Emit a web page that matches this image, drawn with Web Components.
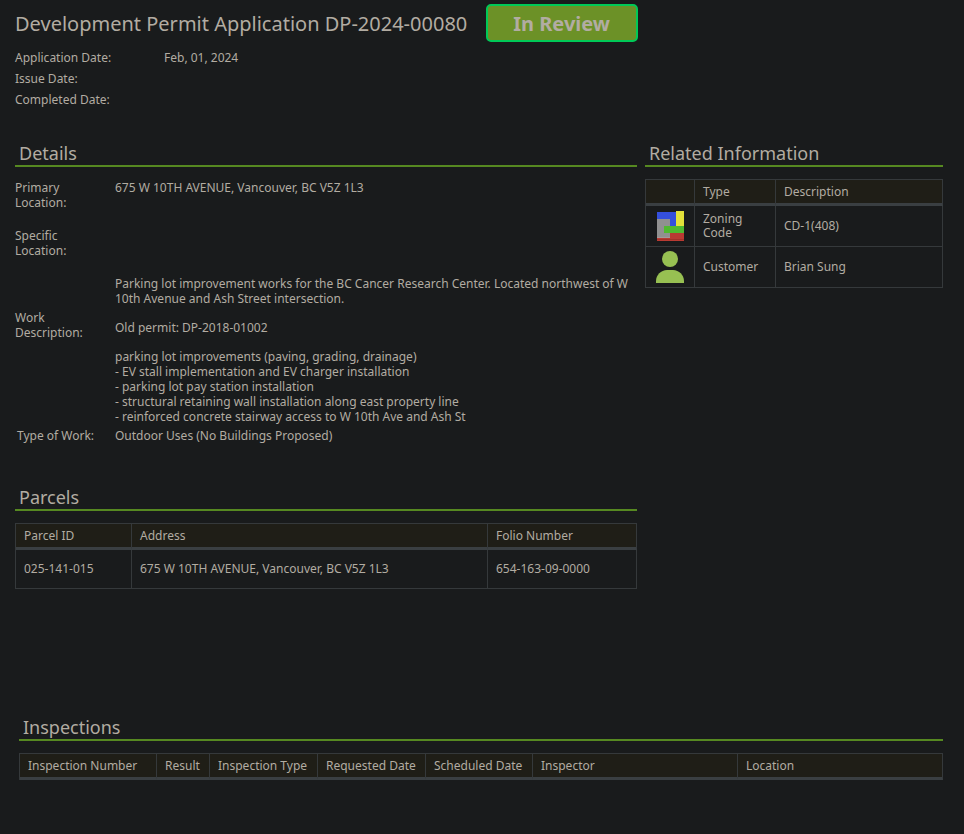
<!DOCTYPE html>
<html lang="en">
<head>
<meta charset="utf-8">
<meta name="viewport" content="width=device-width, initial-scale=1">
<title>Development Permit Application DP-2024-00080</title>
<style>
  html { background: #191b1c; }
  body {
    margin: 0;
    color: #b2aca2;
    background: #191b1c;
    font: 12px/15px "Noto Sans", "Open Sans", sans-serif;
  }
</style>
</head>
<body>
<permit-page></permit-page>

<template id="status-badge">
  <style>
    :host {
      display: block;
      box-sizing: border-box;
      padding: 4px 26px 2px 25px;
      border: 2px solid #00c957;
      border-radius: 5px;
      background: #6c9127;
      font-size: 20px;
      line-height: 28px;
      font-weight: 700;
      white-space: nowrap;
    }
  </style>
  <slot></slot>
</template>

<template id="panel-section">
  <style>
    :host { display: block; }
    h2 {
      margin: 0 0 12px;
      padding-left: 4px;
      border-bottom: 2px solid #568921;
      font-size: 18px;
      line-height: 24px;
      font-weight: 400;
    }
  </style>
  <section>
    <h2></h2>
    <slot></slot>
  </section>
</template>

<template id="field-row">
  <style>
    :host {
      display: grid;
      grid-template-columns: var(--label-width, 100px) minmax(0, 1fr);
    }
    .label { max-width: var(--label-max, 80px); }
  </style>
  <div class="label"><slot name="label"></slot></div>
  <div><slot></slot></div>
</template>

<template id="zoning-icon">
  <style>:host, svg { display: block; } svg { margin: auto; }</style>
  <svg width="28" height="30" viewBox="0 0 28 30" aria-hidden="true" shape-rendering="crispEdges">
    <path fill="#344fdc" d="M1 1h19v15H1z"/>
    <path fill="#e2e13a" d="M20 0h8v15h-8z"/>
    <path fill="#b93a32" d="M1 22h27v8H1z"/>
    <path fill="#a33129" d="M1 28h27v1H1z"/>
    <path fill="#909090" d="M1 8h13v18H1z"/>
    <path fill="#a29a9a" d="M1 26h13v1H1z"/>
    <path fill="#50b930" d="M8 15h20v7H8z"/>
  </svg>
</template>

<template id="customer-icon">
  <style>:host, svg { display: block; } svg { margin: auto; }</style>
  <svg width="28" height="32" viewBox="0 0 28 32" fill="#97c052" aria-hidden="true">
    <circle cx="14" cy="8" r="8"/>
    <path d="M0 32v-2C0 24 5 19 11 19h6c6 0 11 5 11 11v2z"/>
  </svg>
</template>

<template id="data-table">
  <style>
    :host { display: block; }
    table {
      width: 100%;
      table-layout: fixed;
      border-collapse: separate;
      border-spacing: 0;
      border: solid #35393b;
      border-width: 1px 0 0 1px;
    }
    th, td {
      box-sizing: border-box;
      padding: 0 8px;
      border: solid #35393b;
      border-width: 0 1px 1px 0;
      text-align: left;
      font-weight: 400;
      line-height: 14px;
    }
    th {
      height: 26px;
      border-bottom: 3px solid #3a3f42;
      background: #1f1e17;
      white-space: nowrap;
    }
    td { height: var(--row-height, 41px); }
    td.icon { padding: 0; }
  </style>
  <table>
    <colgroup></colgroup>
    <thead><tr></tr></thead>
    <tbody></tbody>
  </table>
</template>

<template id="permit-page">
  <style>
    :host { display: block; padding: 4px 21px 54px 15px; }
    header { display: flex; align-items: center; gap: 19px; }
    h1 { margin: 0; padding-top: 2px; font-size: 20px; line-height: 28px; font-weight: 400; }
    .dates { margin: 5px 0 31px; line-height: 21px; --label-width: 149px; --label-max: none; }
    .columns { display: grid; grid-template-columns: 622fr 298fr; gap: 8px; align-items: start; }
    .details { display: grid; gap: 18px; padding-top: 1px; }
    .details p { margin: 0 0 14px; white-space: pre-line; }
    .details p:last-child { margin: 0; }
    .work { display: block; padding-top: 34px; }
    .single { margin-top: 4px; --label-max: none; }
    .single [slot] { padding-left: 2px; }
    .parcels { margin-top: 42px; --row-height: 39px; }
    .inspections { margin: 126px 0 0 4px; }
  </style>
  <main>
    <header>
      <h1>Development Permit Application DP-2024-00080</h1>
      <status-badge>In Review</status-badge>
    </header>
    <div class="dates">
      <field-row><span slot="label">Application Date:</span>Feb, 01, 2024</field-row>
      <field-row><span slot="label">Issue Date:</span></field-row>
      <field-row><span slot="label">Completed Date:</span></field-row>
    </div>
    <div class="columns">
      <div>
        <panel-section heading="Details">
          <div class="details">
            <field-row><span slot="label">Primary Location:</span>675 W 10TH AVENUE, Vancouver, BC V5Z 1L3</field-row>
            <field-row><span slot="label">Specific Location:</span></field-row>
            <field-row>
              <span slot="label" class="work">Work Description:</span>
              <p>Parking lot improvement works for the BC Cancer Research Center. Located northwest of W 10th Avenue and Ash Street intersection.</p>
              <p>Old permit: DP-2018-01002</p>
              <p>parking lot improvements (paving, grading, drainage)
- EV stall implementation and EV charger installation
- parking lot pay station installation
- structural retaining wall installation along east property line
- reinforced concrete stairway access to W 10th Ave and Ash St</p>
            </field-row>
          </div>
          <field-row class="single"><span slot="label">Type of Work:</span>Outdoor Uses (No Buildings Proposed)</field-row>
        </panel-section>
        <panel-section heading="Parcels" class="parcels">
          <data-table data-set="parcels"></data-table>
        </panel-section>
      </div>
      <panel-section heading="Related Information">
        <data-table data-set="related"></data-table>
      </panel-section>
    </div>
    <panel-section heading="Inspections" class="inspections">
      <data-table data-set="inspections"></data-table>
    </panel-section>
  </main>
</template>

<script>
  const tables = {
    parcels: {
      columns: [['Parcel ID', '116px'], ['Address', 'auto'], ['Folio Number', '149px']],
      rows: [['025-141-015', '675 W 10TH AVENUE, Vancouver, BC V5Z 1L3', '654-163-09-0000']]
    },
    related: {
      columns: [['', '49px'], ['Type', '81px'], ['Description', 'auto']],
      rows: [
        [{ icon: 'zoning-icon' }, 'Zoning Code', 'CD-1(408)'],
        [{ icon: 'customer-icon' }, 'Customer', 'Brian Sung']
      ]
    },
    inspections: {
      columns: [['Inspection Number', '137px'], ['Result', '53px'], ['Inspection Type', '108px'],
        ['Requested Date', '108px'], ['Scheduled Date', '107px'], ['Inspector', 'auto'], ['Location', 'auto']],
      rows: []
    }
  };

  class TemplateElement extends HTMLElement {
    constructor() {
      super();
      const template = document.getElementById(this.localName);
      this.attachShadow({ mode: 'open' }).append(template.content.cloneNode(true));
    }
  }

  class StatusBadge extends TemplateElement {}
  class FieldRow extends TemplateElement {}
  class ZoningIcon extends TemplateElement {}
  class CustomerIcon extends TemplateElement {}
  class PermitPage extends TemplateElement {}

  class PanelSection extends TemplateElement {
    connectedCallback() {
      this.shadowRoot.querySelector('h2').textContent = this.getAttribute('heading');
    }
  }

  class DataTable extends TemplateElement {
    connectedCallback() {
      const { columns, rows } = tables[this.dataset.set];
      const find = selector => this.shadowRoot.querySelector(selector);
      find('colgroup').replaceChildren(...columns.map(([, width]) => {
        const col = document.createElement('col');
        col.style.width = width;
        return col;
      }));
      find('thead tr').replaceChildren(...columns.map(([label]) => {
        const th = document.createElement('th');
        th.scope = 'col';
        th.textContent = label;
        return th;
      }));
      find('tbody').replaceChildren(...rows.map(row => {
        const tr = document.createElement('tr');
        for (const value of row) {
          const td = tr.insertCell();
          if (value.icon) {
            td.className = 'icon';
            td.append(document.createElement(value.icon));
          } else {
            td.textContent = value;
          }
        }
        return tr;
      }));
    }
  }

  customElements.define('status-badge', StatusBadge);
  customElements.define('field-row', FieldRow);
  customElements.define('zoning-icon', ZoningIcon);
  customElements.define('customer-icon', CustomerIcon);
  customElements.define('panel-section', PanelSection);
  customElements.define('data-table', DataTable);
  customElements.define('permit-page', PermitPage);
</script>
</body>
</html>
